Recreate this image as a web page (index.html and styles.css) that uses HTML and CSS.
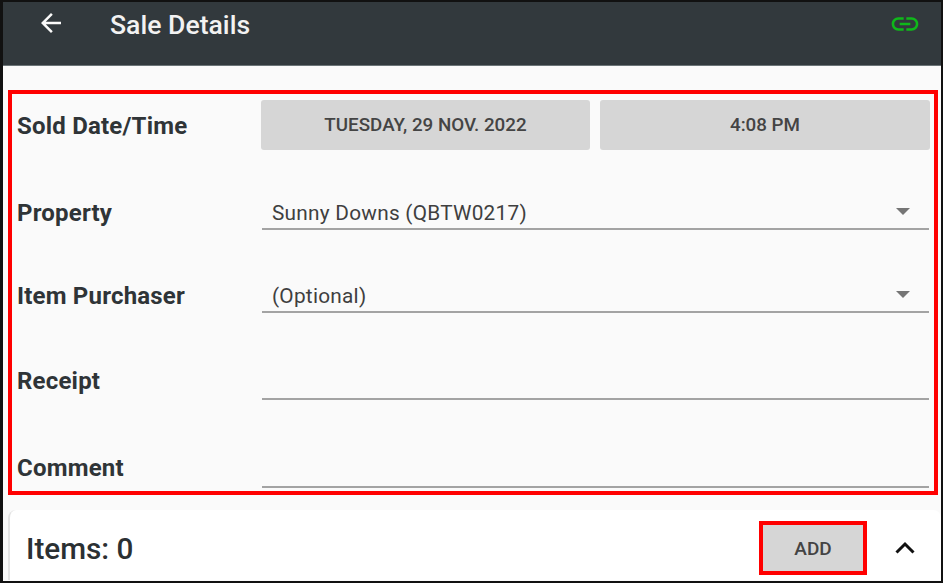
FILE: index.html
```html
<!DOCTYPE html>
<html lang="en">
<head>
<meta charset="utf-8">
<title>Sale Details</title>
<link rel="stylesheet" href="styles.css">
</head>
<body>
<div class="screen">
  <header class="appbar">
    <svg class="back" viewBox="0 0 24 24" width="30" height="30"><path d="M20 11H7.83l5.59-5.59L12 4l-8 8 8 8 1.41-1.41L7.83 13H20v-2z" fill="#fafafa"/></svg>
    <h1 class="title">Sale Details</h1>
    <svg class="link" viewBox="0 0 24 24" width="32" height="32"><path d="M3.9 12c0-1.71 1.39-3.1 3.1-3.1h4V7H7c-2.76 0-5 2.24-5 5s2.24 5 5 5h4v-1.9H7c-1.71 0-3.1-1.39-3.1-3.1zM8 13h8v-2H8v2zm9-6h-4v1.9h4c1.71 0 3.1 1.39 3.1 3.1s-1.39 3.1-3.1 3.1h-4V17h4c2.76 0 5-2.24 5-5s-2.24-5-5-5z" fill="#0fb81a"/></svg>
  </header>
  <main class="content">
    <section class="form">
      <div class="row row-date">
        <span class="label">Sold Date/Time</span>
        <div class="buttons">
          <div class="btn">TUESDAY, 29 NOV. 2022</div>
          <div class="btn">4:08 PM</div>
        </div>
      </div>
      <div class="row row-property">
        <span class="label">Property</span>
        <div class="field"><span>Sunny Downs (QBTW0217)</span><i class="caret"></i></div>
      </div>
      <div class="row row-purchaser">
        <span class="label">Item Purchaser</span>
        <div class="field"><span>(Optional)</span><i class="caret"></i></div>
      </div>
      <div class="row row-receipt">
        <span class="label">Receipt</span>
        <div class="field"></div>
      </div>
      <div class="row row-comment">
        <span class="label">Comment</span>
        <div class="field"></div>
      </div>
    </section>
  </main>
  <footer class="items">
    <span class="items-title">Items: 0</span>
    <div class="add">ADD</div>
    <svg class="chev" viewBox="0 0 24 16" width="24" height="16"><path d="M3.5 13.5 12 5l8.5 8.5" fill="none" stroke="#111" stroke-width="3"/></svg>
  </footer>
</div>
</body>
</html>
```
FILE: styles.css
```css
* { box-sizing: border-box; }
html, body { margin: 0; padding: 0; }
body { width: 943px; height: 583px; overflow: hidden; background: #fff; font-family: Roboto, "Liberation Sans", sans-serif; }
.screen { width: 943px; height: 583px; display: flex; flex-direction: column; border: 2px solid #111; border-left-width: 3px; background: #fafafa; overflow: hidden; }
.appbar { flex: none; height: 64px; background: #32393d; display: flex; align-items: flex-start; padding: 6px 20px 0 33px; border-bottom: 1px solid #6b7477; }
.back { flex: none; }
.title { margin: 1px 0 0 44px; font-size: 26.6px; line-height: 31px; font-weight: 500; color: #f2f2f2; flex: 1; }
.link { flex: none; }
.content { flex: none; padding: 24px 3px 0 5px; }
.form { height: 405px; border: 4px solid #f00; display: flex; flex-direction: column; padding: 6px 3px 0 5px; }
.row { display: grid; grid-template-columns: 245px 1fr; align-items: end; flex: none; }
.label { font-size: 24px; line-height: 27px; font-weight: 700; color: #2f3437; letter-spacing: 0.2px; }
.row-date { height: 50px; align-items: center; }
.row-date .label { margin-top: 2px; }
.buttons { display: grid; grid-template-columns: 329px 330px; column-gap: 10px; margin-left: -1px; height: 50px; }
.btn { background: #d6d6d6; border-radius: 3px; display: flex; align-items: center; justify-content: center; font-size: 18.8px; font-weight: 500; color: #444; }
.field { height: 36px; border-bottom: 2px solid #a3a3a3; display: flex; align-items: center; justify-content: space-between; padding: 3px 19px 0 10px; font-size: 20.8px; color: #3f3f3f; letter-spacing: 0.25px; margin-right: 2px; }
.caret { width: 0; height: 0; border-left: 7px solid transparent; border-right: 7px solid transparent; border-top: 7px solid #757575; margin-top: -3px; }
.row-property { height: 80px; }
.row-purchaser { height: 83px; }
.row-receipt { height: 87px; }
.row-comment { height: 88px; }
.row-property .label { margin-bottom: 3px; }
.row-purchaser .label { margin-bottom: 3px; }
.row-receipt .label { margin-bottom: 5px; }
.row-comment .label { margin-bottom: 6px; }
.items { flex: none; margin: 15px 0 0 5px; height: 70px; background: #fff; border-radius: 8px 8px 0 0; border-left: 2px solid #e4e4e4; display: flex; align-items: flex-start; padding: 0 24px 0 16px; }
.items-title { flex: 1; font-size: 29.7px; line-height: 36px; font-weight: 500; color: #2b3033; margin-top: 21px; }
.add { flex: none; width: 108px; height: 54px; border: 4px solid #f00; background: #d6d6d6; display: flex; align-items: center; justify-content: center; font-size: 19px; font-weight: 500; color: #444; margin-top: 11px; }
.chev { flex: none; margin-left: 26px; margin-top: 29px; }
```
